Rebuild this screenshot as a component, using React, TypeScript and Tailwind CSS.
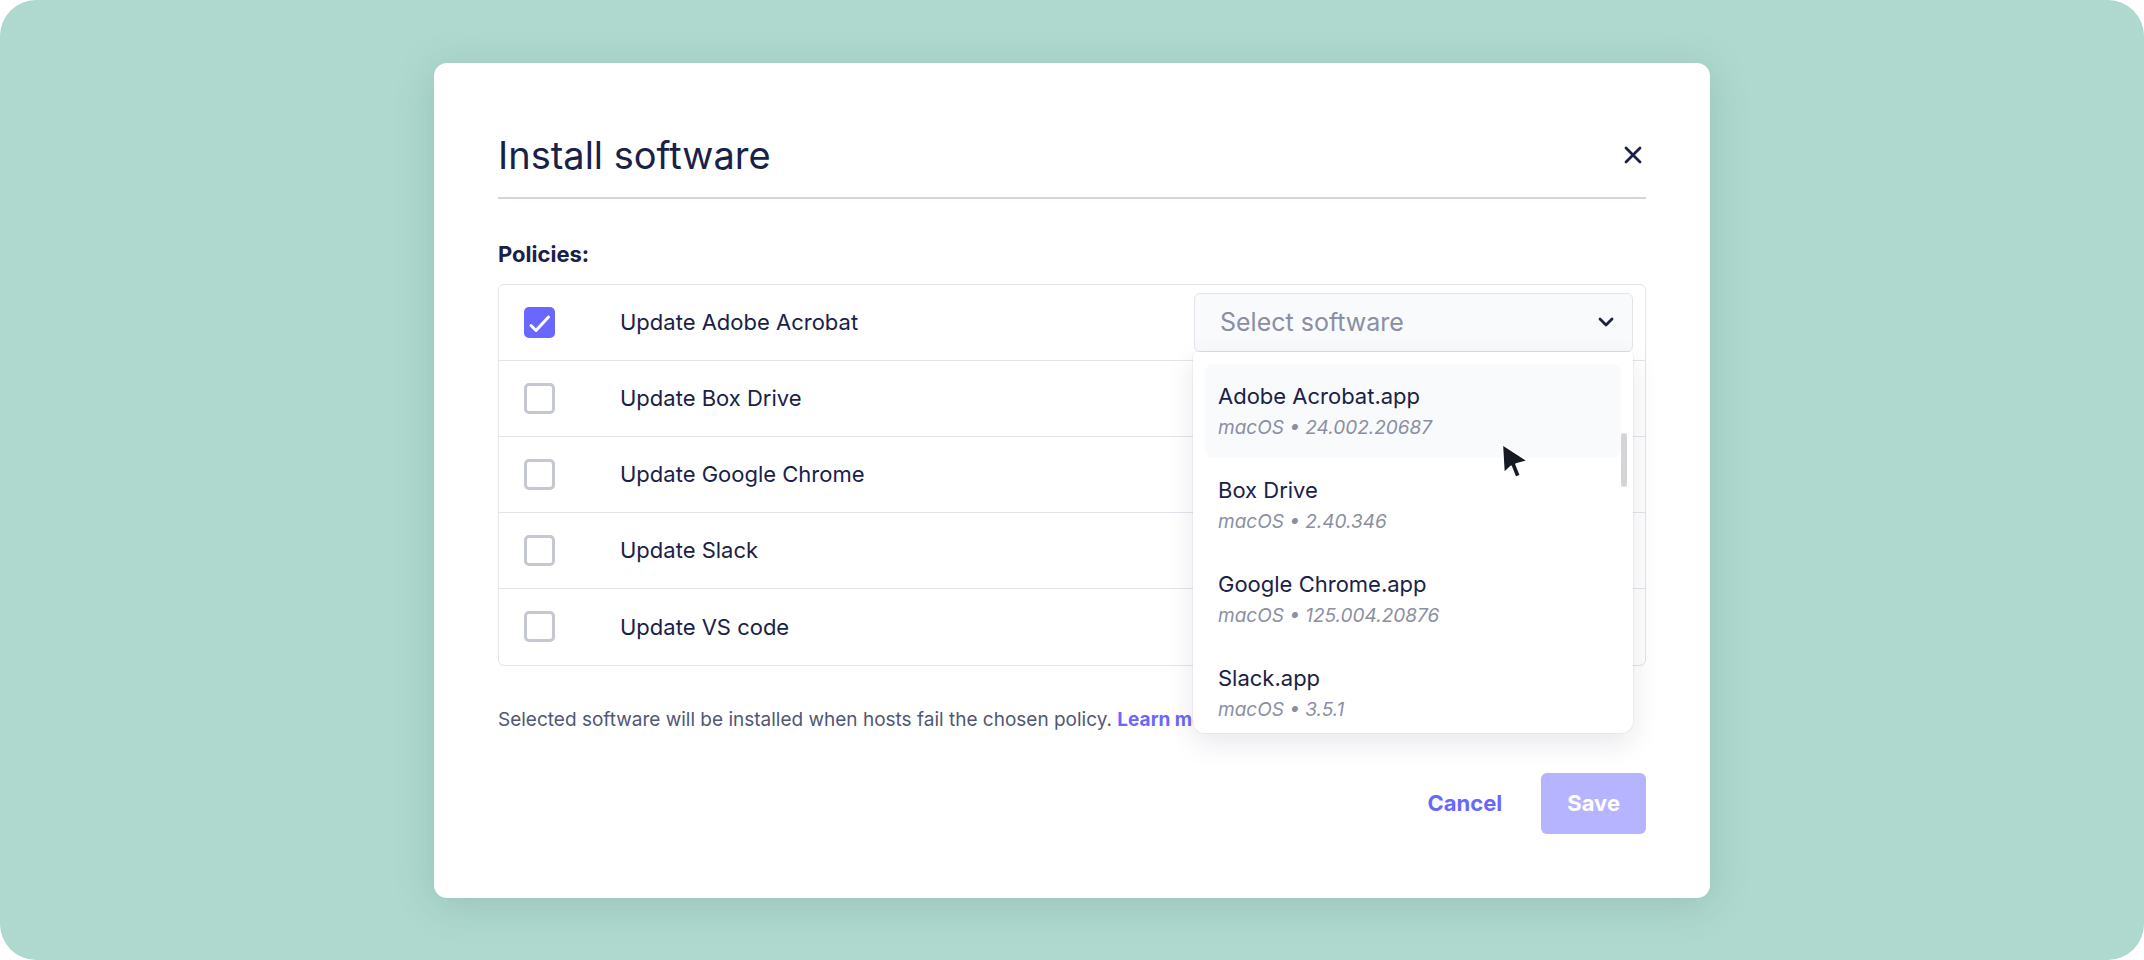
import { useState } from "react";

const policies = [
  "Update Adobe Acrobat",
  "Update Box Drive",
  "Update Google Chrome",
  "Update Slack",
  "Update VS code",
];

const software = [
  { name: "Adobe Acrobat.app", version: "24.002.20687" },
  { name: "Box Drive", version: "2.40.346" },
  { name: "Google Chrome.app", version: "125.004.20876" },
  { name: "Slack.app", version: "3.5.1" },
];

function Checkbox({ checked }: { checked: boolean }) {
  if (checked) {
    return (
      <span className="grid h-[31px] w-[31px] shrink-0 place-items-center rounded-[5px] bg-[#6a67fe]">
        <svg width="31" height="31" viewBox="0 0 31 31" fill="none">
          <path d="M7 18.5l5 5L24.5 10" stroke="#fff" strokeWidth="3" strokeLinecap="round" strokeLinejoin="round" />
        </svg>
      </span>
    );
  }
  return <span className="h-[31px] w-[31px] shrink-0 rounded-[5px] border-[3px] border-[#c5c7d1] bg-white" />;
}

function SoftwareDropdown() {
  return (
    <div className="absolute left-[-1px] right-0 top-full z-10 h-[381px] overflow-hidden rounded-b-xl rounded-t-[4px] bg-white px-[12px] pt-[12px] shadow-[0_10px_28px_rgba(25,33,71,0.10),0_0_0_1px_rgba(25,33,71,0.04)]">
      {software.map((item, i) => (
        <div
          key={item.name}
          className={`rounded-lg px-[13px] pb-[15px] pt-[17px] ${i === 0 ? "bg-[#f9fafc]" : ""}`}
        >
          <p className="text-[22px] leading-[30px] text-[#192147]">{item.name}</p>
          <p className="mt-[2px] text-[19px] italic leading-[30px] text-[#8b8fa2]">macOS • {item.version}</p>
        </div>
      ))}
      <span className="absolute left-[428px] top-[81px] h-[54px] w-[6px] rounded-full bg-[#d5d5d8]" />
      <svg className="absolute left-[307px] top-[90px]" width="31" height="40" viewBox="-2 -2 28 36">
        <path
          d="M0 0L1.5 26L8 20L12 30L16.5 28L12.5 18L23 15Z"
          fill="#161a22"
          stroke="#fff"
          strokeWidth="1.6"
          strokeLinejoin="round"
        />
      </svg>
    </div>
  );
}

export default function App() {
  const [checked] = useState(0);

  return (
    <div className="h-[960px] w-[2144px] bg-white font-['Inter','Noto_Sans',sans-serif]">
      <div className="flex h-full w-full items-center justify-center rounded-[36px] bg-[#afd9cf]">
        <div className="w-[1276px] rounded-[13px] bg-white px-[64px] pb-[64px] pt-[70px] shadow-[0_6px_40px_rgba(40,90,80,0.18)]">
          <div className="flex items-center justify-between border-b-2 border-[#d2d4de] pb-[20px]">
            <h1 className="text-[38px] font-normal leading-[44px] text-[#192147]">Install software</h1>
            <button className="mr-[3px] grid h-[20px] w-[20px] place-items-center">
              <svg width="18" height="18" viewBox="0 0 18 18" fill="none">
                <path d="M2 2l14 14M16 2L2 16" stroke="#192147" strokeWidth="2.8" strokeLinecap="round" />
              </svg>
            </button>
          </div>

          <p className="mt-[40px] text-[22px] font-bold leading-[30px] text-[#192147]">Policies:</p>

          <div className="mt-[15px] rounded-[6px] border border-[#e2e4ea]">
            {policies.map((name, i) => (
              <div
                key={name}
                className={`flex h-[76px] items-center pl-[25px] pr-[12px] ${i < policies.length - 1 ? "border-b border-[#e2e4ea]" : ""}`}
              >
                <Checkbox checked={i === checked} />
                <span className="ml-[65px] text-[22px] leading-[30px] text-[#192147]">{name}</span>
                {i === checked && (
                  <div className="relative ml-auto w-[439px]">
                    <div className="flex h-[59px] items-center justify-between rounded-[6px] border border-[#e2e4ea] bg-[#f9fafc] pl-[25px] pr-[18px]">
                      <span className="text-[25px] leading-[32px] text-[#8b8fa2]">Select software</span>
                      <svg width="16" height="10" viewBox="0 0 16 10" fill="none">
                        <path d="M2 2l6 6 6-6" stroke="#192147" strokeWidth="2.8" strokeLinecap="round" strokeLinejoin="round" />
                      </svg>
                    </div>
                    <SoftwareDropdown />
                  </div>
                )}
              </div>
            ))}
          </div>

          <p className="mt-[40px] text-[19px] leading-[28px] text-[#515774]">
            Selected software will be installed when hosts fail the chosen policy.{" "}
            <span className="font-bold text-[#6a67fe]">Learn more</span>
          </p>

          <div className="mt-[39px] flex items-center justify-end gap-[39px]">
            <button className="text-[22px] font-bold text-[#6a67fe]">Cancel</button>
            <button className="h-[61px] rounded-[6px] bg-[#b6b4fe] px-[26px] text-[22px] font-bold text-white">Save</button>
          </div>
        </div>
      </div>
    </div>
  );
}
